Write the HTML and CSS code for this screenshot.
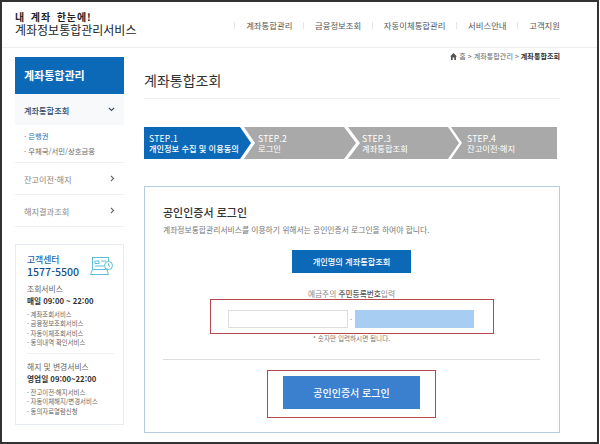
FILE: index.html
```html
<!DOCTYPE html>
<html lang="ko">
<head>
<meta charset="utf-8">
<title>계좌통합조회</title>
<link rel="stylesheet" href="styles.css">
</head>
<body>
<div class="frame">
  <header class="header">
    <div class="brand">
      <div class="brand-top">내 계좌 한눈에!</div>
      <div class="brand-name">계좌정보통합관리서비스</div>
    </div>
    <nav class="gnb">
      <span class="sep"></span><a>계좌통합관리</a>
      <span class="sep"></span><a>금융정보조회</a>
      <span class="sep"></span><a>자동이체통합관리</a>
      <span class="sep"></span><a>서비스안내</a>
      <span class="sep"></span><a>고객지원</a>
    </nav>
  </header>
  <div class="body">
    <aside class="side">
      <div class="side-title">계좌통합관리</div>
      <div class="side-item active"><span>계좌통합조회</span>
        <svg class="arrow" width="7" height="5" viewBox="0 0 7 5"><path d="M1 1l2.5 2.5L6 1" fill="none" stroke="#3d5570" stroke-width="1.1"/></svg>
      </div>
      <ul class="sub">
        <li class="on">· 은행권</li>
        <li>· 우체국/서민/상호금융</li>
      </ul>
      <div class="side-item"><span>잔고이전·해지</span>
        <svg class="arrow" width="5" height="7" viewBox="0 0 5 7"><path d="M1 1l2.5 2.5L1 6" fill="none" stroke="#666" stroke-width="1.1"/></svg>
      </div>
      <div class="side-item"><span>해지결과조회</span>
        <svg class="arrow" width="5" height="7" viewBox="0 0 5 7"><path d="M1 1l2.5 2.5L1 6" fill="none" stroke="#666" stroke-width="1.1"/></svg>
      </div>
      <section class="cs">
        <div class="cs-head">
          <div>
            <div class="cs-label">고객센터</div>
            <div class="cs-tel">1577-5500</div>
          </div>
          <svg class="cs-icon" width="24" height="19" viewBox="0 0 24 19" fill="none" stroke="#5cc0d8" stroke-width="1">
            <rect x="2.5" y="0.5" width="16" height="12"/>
            <path d="M2.5 12.5L0.5 17.5H18.5L17 12.5"/>
            <path d="M5 4h4v2.5H5zM11 4h5M5 9h9"/>
            <circle cx="18.5" cy="8.5" r="4" fill="#fff"/>
            <path d="M18.5 6.3v2.4l1.6 1"/>
          </svg>
        </div>
        <div class="cs-sub">조회서비스</div>
        <div class="cs-time">매일 09:00 ~ 22:00</div>
        <ul class="cs-list">
          <li>· 계좌조회서비스</li>
          <li>· 금융정보조회서비스</li>
          <li>· 자동이체조회서비스</li>
          <li>· 동의내역 확인서비스</li>
        </ul>
        <div class="cs-line"></div>
        <div class="cs-sub">해지 및 변경서비스</div>
        <div class="cs-time">영업일 09:00~22:00</div>
        <ul class="cs-list">
          <li>· 잔고이전·해지서비스</li>
          <li>· 자동이체해지/변경서비스</li>
          <li>· 동의자료열람신청</li>
        </ul>
      </section>
    </aside>
    <main class="main">
      <div class="crumb">
        <svg width="7" height="7" viewBox="0 0 7 7"><path d="M3.5 0L7 3.4H6V7H4.3V4.6H2.7V7H1V3.4H0z" fill="#555"/></svg>
        <span>홈 &gt; 계좌통합관리 &gt; <b>계좌통합조회</b></span>
      </div>
      <h1 class="title">계좌통합조회</h1>
      <ol class="steps">
        <li class="step s1 cur"><span>STEP.1</span><b>개인정보 수집 및 이용동의</b></li>
        <li class="step s2"><span>STEP.2</span><span>로그인</span></li>
        <li class="step s3"><span>STEP.3</span><span>계좌통합조회</span></li>
        <li class="step s4"><span>STEP.4</span><span>잔고이전·해지</span></li>
      </ol>
      <section class="card">
        <h2 class="card-title">공인인증서 로그인</h2>
        <p class="card-desc">계좌정보통합관리서비스를 이용하기 위해서는 공인인증서 로그인을 하여야 합니다.</p>
        <button class="btn-dark">개인명의 계좌통합조회</button>
        <div class="id-label">예금주의 <b>주민등록번호</b>입력</div>
        <div class="red id-box">
          <input class="inp" type="text"><span class="dash">-</span><input class="inp masked" type="text">
        </div>
        <div class="hint">* 숫자만 입력하시면 됩니다.</div>
        <hr class="rule">
        <div class="red login-box"><button class="btn-login">공인인증서 로그인</button></div>
      </section>
    </main>
  </div>
</div>
</body>
</html>
```
FILE: styles.css
```css
* { box-sizing: border-box; }
html, body { margin: 0; padding: 0; background: #fff; }
body { font-family: "Noto Sans CJK KR", "Noto Sans", sans-serif; color: #333; }
ul, ol { list-style: none; margin: 0; padding: 0; }
h1, h2, p { margin: 0; font-weight: 400; }

.frame { width: 599px; height: 444px; border: 2px solid #333; overflow: hidden; }

.header { height: 46px; display: flex; justify-content: space-between; align-items: center; padding: 0 37px 0 13px; border-bottom: 1px solid #eee; }
.brand { margin-bottom: 3px; }
.brand-top { font-size: 10px; line-height: 13px; font-weight: 700; letter-spacing: 0.9px; word-spacing: 2px; color: #222; }
.brand-name { font-size: 12px; line-height: 13px; color: #222; white-space: nowrap; }
.gnb { display: flex; align-items: center; font-size: 8.4px; color: #555; margin-top: 1px; }
.gnb a { padding: 0 10.8px; }
.sep { width: 1px; height: 7px; background: #e4e4e4; }
.gnb a:last-child { padding-right: 0; }

.body { display: flex; padding: 9px 0 0 13px; }
.side { width: 109px; flex: none; }
.side-title { height: 37px; line-height: 36px; background: #0b69b7; color: #fff; font-size: 11px; font-weight: 700; padding-left: 9px; }
.side-item { height: 32px; display: flex; align-items: center; justify-content: space-between; padding: 0 9px 0 9px; font-size: 8.2px; color: #888; border-bottom: 1px solid #eee; }
.side-item.active { height: 31px; background: #f7f9fb; color: #2f4a6b; font-weight: 500; border-bottom: 0; }
.sub { padding: 3px 0 4px 9px; font-size: 7.4px; line-height: 15px; color: #666; border-bottom: 1px solid #eee; }
.sub .on { color: #1d77bd; }

.cs { margin-top: 17px; height: 181px; border: 1px solid #e6ecf1; padding: 9px 0 0 11px; }
.cs-head { display: flex; justify-content: space-between; padding-right: 9px; align-items: center; }
.cs-label { font-size: 8.8px; line-height: 11px; color: #1e6aa8; font-weight: 500; }
.cs-tel { font-size: 10.6px; line-height: 14px; color: #14548c; font-weight: 500; }
.cs-icon { margin-top: -1px; }
.cs-sub { font-size: 7.8px; line-height: 11px; color: #666; margin-top: 4px; }
.cs-time { font-size: 7.7px; line-height: 12px; color: #333; font-weight: 700; margin-top: 1px; }
.cs-list { font-size: 6.4px; line-height: 9.3px; color: #666; margin-top: 3px; }
.cs-line { height: 1px; width: 87px; background: #f0f0f0; margin: 6px 0 7px; }
.cs-line + .cs-sub { margin-top: 0; }

.main { width: 416px; margin-left: 20px; flex: none; margin-top: -5px; }
.crumb { display: flex; justify-content: flex-end; align-items: center; gap: 2px; font-size: 7.1px; line-height: 9px; color: #666; }
.crumb b { color: #333; }
.title { font-size: 14px; line-height: 20px; color: #333; border-bottom: 1px solid #eee; height: 39px; margin-top: -1px; padding-top: 10px; }
.steps { display: flex; margin-top: 28px; height: 32px; width: 413px; }
.step { height: 32px; background: #a9a9a9; color: #fff; display: flex; flex-direction: column; justify-content: center; font-size: 8.3px; line-height: 10.5px; flex: none; }
.step span:first-child { letter-spacing: 0.2px; font-size: 8.6px; }
.cur { background: #0b69b7; }
.s1 { width: 107px; padding-left: 5px; clip-path: polygon(0 0, calc(100% - 11px) 0, 100% 50%, calc(100% - 11px) 100%, 0 100%); }
.s1 b { font-size: 8.2px; font-weight: 500; white-space: nowrap; }
.s2 { width: 112px; margin-left: -7px; padding-left: 14px; clip-path: polygon(0 0, calc(100% - 12px) 0, 100% 50%, calc(100% - 12px) 100%, 0 100%, 11px 50%); }
.s3 { width: 111px; margin-left: -8px; padding-left: 14px; clip-path: polygon(0 0, calc(100% - 11px) 0, 100% 50%, calc(100% - 11px) 100%, 0 100%, 12px 50%); }
.s4 { width: 106px; margin-left: -8px; padding-left: 16px; clip-path: polygon(0 0, 100% 0, 100% 100%, 0 100%, 11px 50%); }

.card { margin-top: 27px; height: 247px; border: 1px solid #b5d0dc; padding: 18px 19px 0 18px; display: flex; flex-direction: column; align-items: center; }
.card-title { align-self: flex-start; font-size: 11px; line-height: 14px; font-weight: 500; color: #333; }
.card-desc { align-self: flex-start; font-size: 7.8px; line-height: 11px; color: #777; margin-top: 5px; white-space: nowrap; }
.btn-dark { margin-top: 15px; width: 119px; height: 23px; border: 0; background: #0b69b7; color: #fff; font: 500 8.2px/23px "Noto Sans CJK KR", sans-serif; padding: 0; flex: none; }
.id-label { margin-top: 16px; font-size: 7.7px; line-height: 10px; color: #888; height: 10px; }
.id-label b { color: #555; font-weight: 500; }
.red { border: 1px solid #b8474d; }
.id-box { width: 284px; height: 35px; display: flex; align-items: center; padding: 5px 0 0 17px; flex: none; }
.inp { width: 120px; height: 18px; border: 1px solid #ddd; background: #fff; padding: 0; margin: 0; outline: 0; }
.masked { width: 119px; background: #a8cdf2; border: 0; }
.dash { width: 7px; text-align: center; font-size: 7px; color: #777; }
.hint { font-size: 6.6px; line-height: 10px; color: #777; height: 10px; margin-top: -1px; }
.rule { width: 377px; height: 1px; border: 0; background: #ddd; margin: 16px 0 0; flex: none; }
.login-box { width: 169px; height: 48px; margin-top: 10px; display: flex; justify-content: center; align-items: flex-start; padding-top: 5px; flex: none; }
.btn-login { width: 137px; height: 33px; border: 0; background: #3b7fcf; color: #fff; font: 500 10px/33px "Noto Sans CJK KR", sans-serif; padding: 0; }
```
